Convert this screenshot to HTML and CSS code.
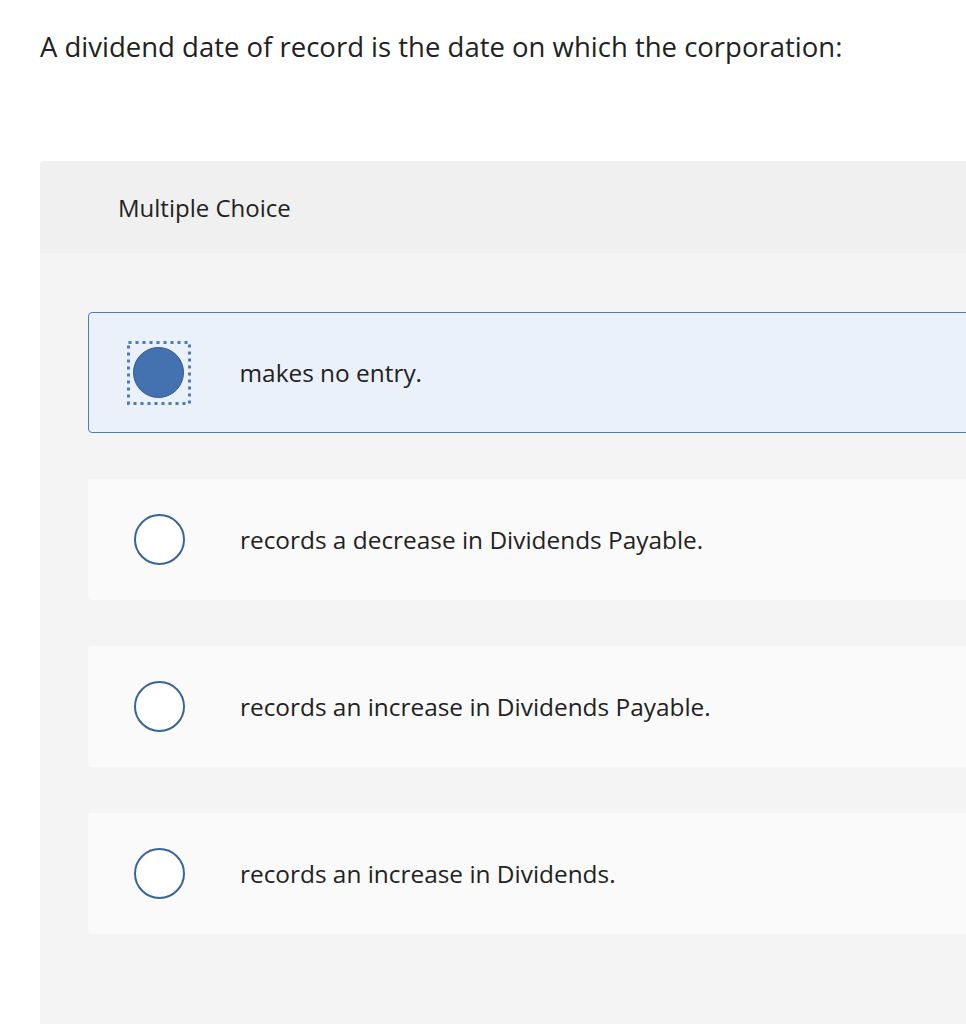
FILE: index.html
```html
<!DOCTYPE html>
<html>
<head>
<meta charset="utf-8">
<link rel="stylesheet" href="styles.css">
</head>
<body>
<div class="question">A dividend date of record is the date on which the corporation:</div>
<div class="panel">
  <div class="panel-head">Multiple Choice</div>
  <div class="panel-body">
    <div class="option selected">
      <div class="radio-wrap focus">
        <svg class="focus-ring" width="64" height="64" viewBox="0 0 64 64"><rect x="1.5" y="1.5" width="61" height="61" fill="none" stroke="#4a7bc0" stroke-width="3" stroke-dasharray="3 4"/></svg>
        <span class="radio checked"></span>
      </div>
      <div class="label">makes no entry.</div>
    </div>
    <div class="option">
      <div class="radio-wrap"><span class="radio"></span></div>
      <div class="label">records a decrease in Dividends Payable.</div>
    </div>
    <div class="option">
      <div class="radio-wrap"><span class="radio"></span></div>
      <div class="label">records an increase in Dividends Payable.</div>
    </div>
    <div class="option">
      <div class="radio-wrap"><span class="radio"></span></div>
      <div class="label">records an increase in Dividends.</div>
    </div>
  </div>
</div>
</body>
</html>
```
FILE: styles.css
```css
html, body {
  margin: 0;
  padding: 0;
  background: #ffffff;
  overflow: hidden;
}
body {
  font-family: "Open Sans", "Lato", sans-serif;
  color: #222222;
  width: 966px;
  height: 1024px;
}
.question {
  padding: 28px 0 0 40px;
  font-size: 27.5px;
  line-height: 38px;
  height: 161px;
  box-sizing: border-box;
}
.panel {
  margin-left: 40px;
  background: #f4f4f4;
  border-radius: 4px 0 0 0;
  height: 900px;
}
.panel-head {
  background: #f0f0f0;
  height: 92px;
  display: flex;
  align-items: center;
  padding-left: 78px;
  font-size: 24px;
  border-radius: 4px 0 0 0;
}
.panel-body {
  padding: 59px 0 0 48px;
  display: flex;
  flex-direction: column;
  gap: 46px;
}
.option {
  display: flex;
  align-items: center;
  height: 121px;
  box-sizing: border-box;
  background: #fafafa;
  border-radius: 4px;
  margin-right: -10px;
}
.option.selected {
  background: #eaf1fa;
  border: 1.5px solid #4d7cbd;
}
.radio-wrap {
  position: relative;
  width: 64px;
  height: 64px;
  margin-left: 39px;
  display: flex;
  align-items: center;
  justify-content: center;
  box-sizing: border-box;
}
.option.selected .radio-wrap {
  margin-left: 37.5px;
}
.focus-ring {
  position: absolute;
  left: 0;
  top: 0;
}
.radio {
  display: block;
  width: 51px;
  height: 51px;
  border-radius: 50%;
  border: 2px solid #386598;
  background: #ffffff;
  box-sizing: border-box;
}
.radio.checked {
  background: #4472b0;
  border: 1.5px solid #2f5a8c;
}
.label {
  margin-left: 49px;
  font-size: 24.4px;
}
```
